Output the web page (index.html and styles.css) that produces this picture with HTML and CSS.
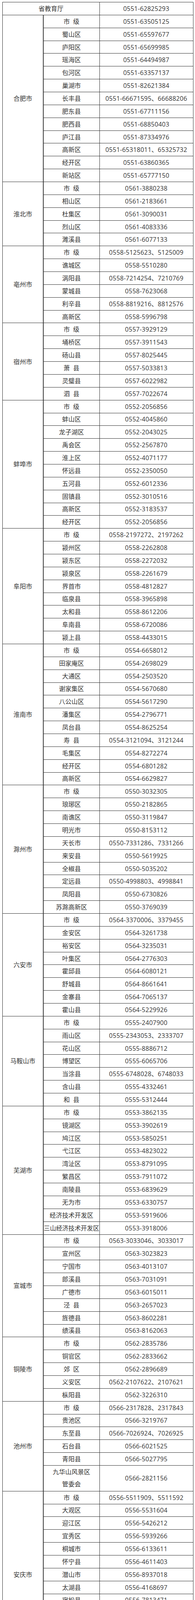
FILE: index.html
```html
<!DOCTYPE html>
<html lang="zh-CN">
<head>
<meta charset="utf-8">
<meta name="viewport" content="width=device-width, initial-scale=1">
<title>安徽省教育部门电话</title>
<link rel="stylesheet" href="styles.css">
</head>
<body>
<div class="table">
  <div class="row"><div class="head">省教育厅</div><div class="tel">0551-62825293</div></div>

  <div class="block">
    <div class="city">合肥市</div>
    <div class="rows">
      <div class="row"><div class="dist">市  级</div><div class="tel">0551-63505125</div></div>
      <div class="row"><div class="dist">蜀山区</div><div class="tel">0551-65597677</div></div>
      <div class="row"><div class="dist">庐阳区</div><div class="tel">0551-65699985</div></div>
      <div class="row"><div class="dist">瑶海区</div><div class="tel">0551-64494987</div></div>
      <div class="row"><div class="dist">包河区</div><div class="tel">0551-63357137</div></div>
      <div class="row"><div class="dist">巢湖市</div><div class="tel">0551-82621384</div></div>
      <div class="row"><div class="dist">长丰县</div><div class="tel">0551-66671595、66688206</div></div>
      <div class="row"><div class="dist">肥东县</div><div class="tel">0551-67711156</div></div>
      <div class="row"><div class="dist">肥西县</div><div class="tel">0551-68850403</div></div>
      <div class="row"><div class="dist">庐江县</div><div class="tel">0551-87334976</div></div>
      <div class="row"><div class="dist">高新区</div><div class="tel">0551-65318011、65325732</div></div>
      <div class="row"><div class="dist">经开区</div><div class="tel">0551-63860365</div></div>
      <div class="row"><div class="dist">新站区</div><div class="tel">0551-65777150</div></div>
    </div>
  </div>

  <div class="block">
    <div class="city">淮北市</div>
    <div class="rows">
      <div class="row"><div class="dist">市  级</div><div class="tel">0561-3880238</div></div>
      <div class="row"><div class="dist">相山区</div><div class="tel">0561-2183661</div></div>
      <div class="row"><div class="dist">杜集区</div><div class="tel">0561-3090031</div></div>
      <div class="row"><div class="dist">烈山区</div><div class="tel">0561-4083336</div></div>
      <div class="row"><div class="dist">濉溪县</div><div class="tel">0561-6077133</div></div>
    </div>
  </div>

  <div class="block">
    <div class="city">亳州市</div>
    <div class="rows">
      <div class="row"><div class="dist">市  级</div><div class="tel">0558-5125623、5125009</div></div>
      <div class="row"><div class="dist">谯城区</div><div class="tel">0558-5510280</div></div>
      <div class="row"><div class="dist">涡阳县</div><div class="tel">0558-7214254、7210769</div></div>
      <div class="row"><div class="dist">蒙城县</div><div class="tel">0558-7623068</div></div>
      <div class="row"><div class="dist">利辛县</div><div class="tel">0558-8819216、8812576</div></div>
      <div class="row"><div class="dist">高新区</div><div class="tel">0558-5996798</div></div>
    </div>
  </div>

  <div class="block">
    <div class="city">宿州市</div>
    <div class="rows">
      <div class="row"><div class="dist">市  级</div><div class="tel">0557-3929129</div></div>
      <div class="row"><div class="dist">埇桥区</div><div class="tel">0557-3911543</div></div>
      <div class="row"><div class="dist">砀山县</div><div class="tel">0557-8025445</div></div>
      <div class="row"><div class="dist">萧  县</div><div class="tel">0557-5033813</div></div>
      <div class="row"><div class="dist">灵璧县</div><div class="tel">0557-6022982</div></div>
      <div class="row"><div class="dist">泗  县</div><div class="tel">0557-7022674</div></div>
    </div>
  </div>

  <div class="block">
    <div class="city">蚌埠市</div>
    <div class="rows">
      <div class="row"><div class="dist">市  级</div><div class="tel">0552-2056856</div></div>
      <div class="row"><div class="dist">蚌山区</div><div class="tel">0552-4045860</div></div>
      <div class="row"><div class="dist">龙子湖区</div><div class="tel">0552-2043025</div></div>
      <div class="row"><div class="dist">禹会区</div><div class="tel">0552-2567870</div></div>
      <div class="row"><div class="dist">淮上区</div><div class="tel">0552-4071177</div></div>
      <div class="row"><div class="dist">怀远县</div><div class="tel">0552-2350050</div></div>
      <div class="row"><div class="dist">五河县</div><div class="tel">0552-6012336</div></div>
      <div class="row"><div class="dist">固镇县</div><div class="tel">0552-3010516</div></div>
      <div class="row"><div class="dist">高新区</div><div class="tel">0552-3183537</div></div>
      <div class="row"><div class="dist">经开区</div><div class="tel">0552-2056856</div></div>
    </div>
  </div>

  <div class="block">
    <div class="city">阜阳市</div>
    <div class="rows">
      <div class="row"><div class="dist">市  级</div><div class="tel">0558-2197272、2197262</div></div>
      <div class="row"><div class="dist">颍州区</div><div class="tel">0558-2262808</div></div>
      <div class="row"><div class="dist">颍东区</div><div class="tel">0558-2272032</div></div>
      <div class="row"><div class="dist">颍泉区</div><div class="tel">0558-2261679</div></div>
      <div class="row"><div class="dist">界首市</div><div class="tel">0558-4812827</div></div>
      <div class="row"><div class="dist">临泉县</div><div class="tel">0558-3965898</div></div>
      <div class="row"><div class="dist">太和县</div><div class="tel">0558-8612206</div></div>
      <div class="row"><div class="dist">阜南县</div><div class="tel">0558-6720086</div></div>
      <div class="row"><div class="dist">颍上县</div><div class="tel">0558-4433015</div></div>
    </div>
  </div>

  <div class="block">
    <div class="city">淮南市</div>
    <div class="rows">
      <div class="row"><div class="dist">市  级</div><div class="tel">0554-6658012</div></div>
      <div class="row"><div class="dist">田家庵区</div><div class="tel">0554-2698029</div></div>
      <div class="row"><div class="dist">大通区</div><div class="tel">0554-2503520</div></div>
      <div class="row"><div class="dist">谢家集区</div><div class="tel">0554-5670680</div></div>
      <div class="row"><div class="dist">八公山区</div><div class="tel">0554-5617290</div></div>
      <div class="row"><div class="dist">潘集区</div><div class="tel">0554-2796771</div></div>
      <div class="row"><div class="dist">凤台县</div><div class="tel">0554-8625254</div></div>
      <div class="row"><div class="dist">寿  县</div><div class="tel">0554-3121094、3121244</div></div>
      <div class="row"><div class="dist">毛集区</div><div class="tel">0554-8272274</div></div>
      <div class="row"><div class="dist">经开区</div><div class="tel">0554-6801282</div></div>
      <div class="row"><div class="dist">高新区</div><div class="tel">0554-6629827</div></div>
    </div>
  </div>

  <div class="block">
    <div class="city">滁州市</div>
    <div class="rows">
      <div class="row"><div class="dist">市  级</div><div class="tel">0550-3032305</div></div>
      <div class="row"><div class="dist">琅琊区</div><div class="tel">0550-2182865</div></div>
      <div class="row"><div class="dist">南谯区</div><div class="tel">0550-3119847</div></div>
      <div class="row"><div class="dist">明光市</div><div class="tel">0550-8153112</div></div>
      <div class="row"><div class="dist">天长市</div><div class="tel">0550-7331286、7331266</div></div>
      <div class="row"><div class="dist">来安县</div><div class="tel">0550-5619925</div></div>
      <div class="row"><div class="dist">全椒县</div><div class="tel">0550-5035202</div></div>
      <div class="row"><div class="dist">定远县</div><div class="tel">0550-4998803、4998841</div></div>
      <div class="row"><div class="dist">凤阳县</div><div class="tel">0550-6730826</div></div>
      <div class="row"><div class="dist">苏滁高新区</div><div class="tel">0550-3769039</div></div>
    </div>
  </div>

  <div class="block">
    <div class="city">六安市</div>
    <div class="rows">
      <div class="row"><div class="dist">市  级</div><div class="tel">0564-3370006、3379455</div></div>
      <div class="row"><div class="dist">金安区</div><div class="tel">0564-3261738</div></div>
      <div class="row"><div class="dist">裕安区</div><div class="tel">0564-3235031</div></div>
      <div class="row"><div class="dist">叶集区</div><div class="tel">0564-2776303</div></div>
      <div class="row"><div class="dist">霍邱县</div><div class="tel">0564-6080121</div></div>
      <div class="row"><div class="dist">舒城县</div><div class="tel">0564-8661641</div></div>
      <div class="row"><div class="dist">金寨县</div><div class="tel">0564-7065137</div></div>
      <div class="row"><div class="dist">霍山县</div><div class="tel">0564-5229926</div></div>
    </div>
  </div>

  <div class="block">
    <div class="city">马鞍山市</div>
    <div class="rows">
      <div class="row"><div class="dist">市  级</div><div class="tel">0555-2407900</div></div>
      <div class="row"><div class="dist">雨山区</div><div class="tel">0555-2343053、2333707</div></div>
      <div class="row"><div class="dist">花山区</div><div class="tel">0555-8886712</div></div>
      <div class="row"><div class="dist">博望区</div><div class="tel">0555-6065706</div></div>
      <div class="row"><div class="dist">当涂县</div><div class="tel">0555-6748028、6748033</div></div>
      <div class="row"><div class="dist">含山县</div><div class="tel">0555-4332461</div></div>
      <div class="row"><div class="dist">和  县</div><div class="tel">0555-5312444</div></div>
    </div>
  </div>

  <div class="block">
    <div class="city">芜湖市</div>
    <div class="rows">
      <div class="row"><div class="dist">市  级</div><div class="tel">0553-3862135</div></div>
      <div class="row"><div class="dist">镜湖区</div><div class="tel">0553-3902619</div></div>
      <div class="row"><div class="dist">鸠江区</div><div class="tel">0553-5850251</div></div>
      <div class="row"><div class="dist">弋江区</div><div class="tel">0553-4823022</div></div>
      <div class="row"><div class="dist">湾沚区</div><div class="tel">0553-8791095</div></div>
      <div class="row"><div class="dist">繁昌区</div><div class="tel">0553-7911072</div></div>
      <div class="row"><div class="dist">南陵县</div><div class="tel">0553-6839629</div></div>
      <div class="row"><div class="dist">无为市</div><div class="tel">0553-6330757</div></div>
      <div class="row"><div class="dist">经济技术开发区</div><div class="tel">0553-5919606</div></div>
      <div class="row"><div class="dist long">三山经济技术开发区</div><div class="tel">0553-3918006</div></div>
    </div>
  </div>

  <div class="block">
    <div class="city">宣城市</div>
    <div class="rows">
      <div class="row"><div class="dist">市  级</div><div class="tel">0563-3033046、3033017</div></div>
      <div class="row"><div class="dist">宣州区</div><div class="tel">0563-3023823</div></div>
      <div class="row"><div class="dist">宁国市</div><div class="tel">0563-4013107</div></div>
      <div class="row"><div class="dist">郎溪县</div><div class="tel">0563-7031091</div></div>
      <div class="row"><div class="dist">广德市</div><div class="tel">0563-6015011</div></div>
      <div class="row"><div class="dist">泾  县</div><div class="tel">0563-2657023</div></div>
      <div class="row"><div class="dist">旌德县</div><div class="tel">0563-8602281</div></div>
      <div class="row"><div class="dist">绩溪县</div><div class="tel">0563-8162063</div></div>
    </div>
  </div>

  <div class="block">
    <div class="city">铜陵市</div>
    <div class="rows">
      <div class="row"><div class="dist">市  级</div><div class="tel">0562-2835786</div></div>
      <div class="row"><div class="dist">铜官区</div><div class="tel">0562-2833662</div></div>
      <div class="row"><div class="dist">郊  区</div><div class="tel">0562-2896689</div></div>
      <div class="row"><div class="dist">义安区</div><div class="tel">0562-2107622、2107621</div></div>
      <div class="row"><div class="dist">枞阳县</div><div class="tel">0562-3226310</div></div>
    </div>
  </div>

  <div class="block">
    <div class="city">池州市</div>
    <div class="rows">
      <div class="row"><div class="dist">市  级</div><div class="tel">0566-2317828、2317843</div></div>
      <div class="row"><div class="dist">贵池区</div><div class="tel">0566-3219767</div></div>
      <div class="row"><div class="dist">东至县</div><div class="tel">0566-7026924、7026925</div></div>
      <div class="row"><div class="dist">石台县</div><div class="tel">0566-6021525</div></div>
      <div class="row"><div class="dist">青阳县</div><div class="tel">0566-5027795</div></div>
      <div class="row tall"><div class="dist two">九华山风景区<br>管委会</div><div class="tel">0566-2821156</div></div>
    </div>
  </div>

  <div class="block">
    <div class="city">安庆市</div>
    <div class="rows">
      <div class="row"><div class="dist">市  级</div><div class="tel">0556-5511909、5511592</div></div>
      <div class="row"><div class="dist">大观区</div><div class="tel">0556-5531604</div></div>
      <div class="row"><div class="dist">迎江区</div><div class="tel">0556-5426212</div></div>
      <div class="row"><div class="dist">宜秀区</div><div class="tel">0556-5939266</div></div>
      <div class="row"><div class="dist">桐城市</div><div class="tel">0556-6133611</div></div>
      <div class="row"><div class="dist">怀宁县</div><div class="tel">0556-4611403</div></div>
      <div class="row"><div class="dist">潜山市</div><div class="tel">0556-8937018</div></div>
      <div class="row"><div class="dist">太湖县</div><div class="tel">0556-4168697</div></div>
      <div class="row"><div class="dist">宿松县</div><div class="tel">0556-7813471</div></div>
      <div class="row"><div class="dist">望江县</div><div class="tel">0556-7178037</div></div>
      <div class="row"><div class="dist">岳西县</div><div class="tel">0556-2181622</div></div>
      <div class="row"><div class="dist">经开区</div><div class="tel">0556-5200395</div></div>
      <div class="row"><div class="dist">高新区</div><div class="tel">0556-5367325</div></div>
    </div>
  </div>

  <div class="block">
    <div class="city">黄山市</div>
    <div class="rows">
      <div class="row"><div class="dist">市  级</div><div class="tel">0559-2542413</div></div>
      <div class="row"><div class="dist">屯溪区</div><div class="tel">0559-2596231</div></div>
      <div class="row"><div class="dist">黄山区</div><div class="tel">0559-8532523</div></div>
      <div class="row"><div class="dist">徽州区</div><div class="tel">0559-3516636</div></div>
      <div class="row"><div class="dist">歙  县</div><div class="tel">0559-6519195、6510971</div></div>
      <div class="row"><div class="dist">休宁县</div><div class="tel">0559-7512139</div></div>
      <div class="row"><div class="dist">黟  县</div><div class="tel">0559-5526103</div></div>
      <div class="row"><div class="dist">祁门县</div><div class="tel">0559-4527361</div></div>
    </div>
  </div>
</div>
</body>
</html>
```

FILE: styles.css
```css
html, body {
  margin: 0;
  padding: 0;
  background: #ffffff;
  -webkit-text-size-adjust: 100%;
  text-size-adjust: 100%;
}

.table {
  width: 489.5px;
  margin: 5px 0 0 6px;
  box-sizing: border-box;
  border-top: 1px solid #2e2e2e;
  border-left: 1px solid #2e2e2e;
  font-family: "Open Sans", "Noto Sans CJK SC", sans-serif;
  font-size: 16px;
  line-height: 20px;
  color: #333333;
}

.block {
  display: flex;
}

.rows {
  flex: 1;
  min-width: 0;
}

.row {
  display: flex;
  height: 32.86px;
}

.row.tall {
  height: 65.72px;
}

.head,
.city,
.dist,
.tel {
  box-sizing: border-box;
  display: flex;
  align-items: center;
  justify-content: center;
  text-align: center;
  white-space: pre;
  border-right: 1px solid #2e2e2e;
  border-bottom: 1px solid #2e2e2e;
}

.head {
  flex: none;
  width: 248.5px;
}

.city {
  flex: none;
  width: 105px;
  border-right: 2px solid #3a3a3a;
}

.dist {
  flex: none;
  width: 143.5px;
}

.dist.long {
  font-size: 15.8px;
}

.dist.two {
  display: block;
  white-space: normal;
  line-height: 31.5px;
  padding-top: 1px;
}

.tel {
  flex: 1;
  letter-spacing: 0.25px;
}
```
